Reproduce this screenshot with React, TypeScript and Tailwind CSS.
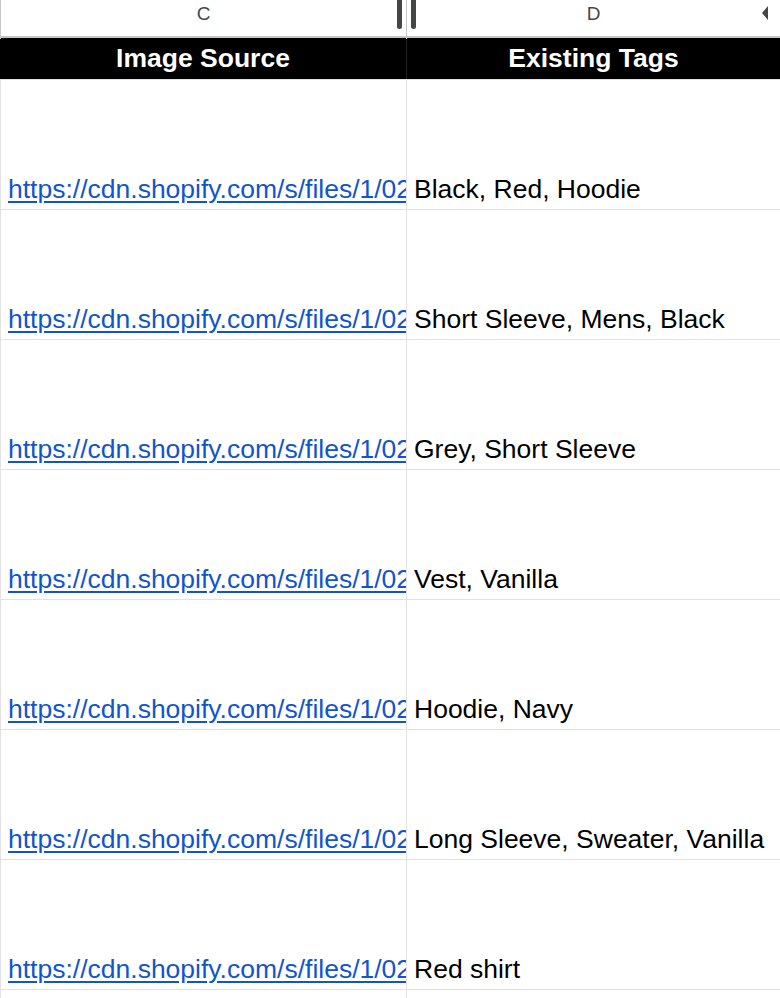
import React from "react";

const rows = [
  "Black, Red, Hoodie",
  "Short Sleeve, Mens, Black",
  "Grey, Short Sleeve",
  "Vest, Vanilla",
  "Hoodie, Navy",
  "Long Sleeve, Sweater, Vanilla",
  "Red shirt",
  "",
];

export default function App() {
  return (
    <div className="w-[780px] h-[998px] overflow-hidden bg-white font-['Liberation_Sans',Arial,sans-serif]">
      {/* column letters */}
      <div className="relative grid grid-cols-[407px_373px] h-[38px] border-b-2 border-[#c4c7c5]">
        <div className="flex items-center justify-center border-r border-[#c4c7c5] border-l text-[19px] text-[#444746] pb-[10px]">
          C
        </div>
        <div className="flex items-center justify-center text-[19px] text-[#444746] pb-[10px]">
          D
        </div>
        <div className="absolute left-[397px] top-0 w-[5px] h-[29px] bg-[#444746] rounded-b-[3px]" />
        <div className="absolute left-[411px] top-0 w-[5px] h-[29px] bg-[#444746] rounded-b-[3px]" />
        <div className="absolute left-[762px] top-[6px] w-0 h-0 border-y-[7px] border-y-transparent border-r-[6px] border-r-[#444746]" />
      </div>
      {/* black header */}
      <div className="grid grid-cols-[407px_373px] h-[42px] bg-black border-b border-[#e2e2e2]">
        <div className="flex items-center justify-center text-white font-bold text-[26.5px] border-r border-[#222]">
          Image Source
        </div>
        <div className="flex items-center justify-center text-white font-bold text-[26.5px]">
          Existing Tags
        </div>
      </div>
      {rows.map((tag, i) => (
        <div
          key={i}
          className="grid grid-cols-[407px_373px] h-[130px] border-b border-[#e2e2e2]"
        >
          <div className="flex items-end overflow-hidden whitespace-nowrap border-l border-r border-[#e2e2e2] pl-[7px] pb-[5px]">
            {i < 7 && (
              <span className="text-[26.5px] text-[#1155cc] underline underline-offset-[3px] leading-[30px]">
                https://cdn.shopify.com/s/files/1/0262/2226/5555/products/image.jpg
              </span>
            )}
          </div>
          <div className="flex items-end overflow-hidden whitespace-nowrap pl-[7px] pb-[5px]">
            <span className="text-[26.5px] text-black leading-[30px]">{tag}</span>
          </div>
        </div>
      ))}
    </div>
  );
}
